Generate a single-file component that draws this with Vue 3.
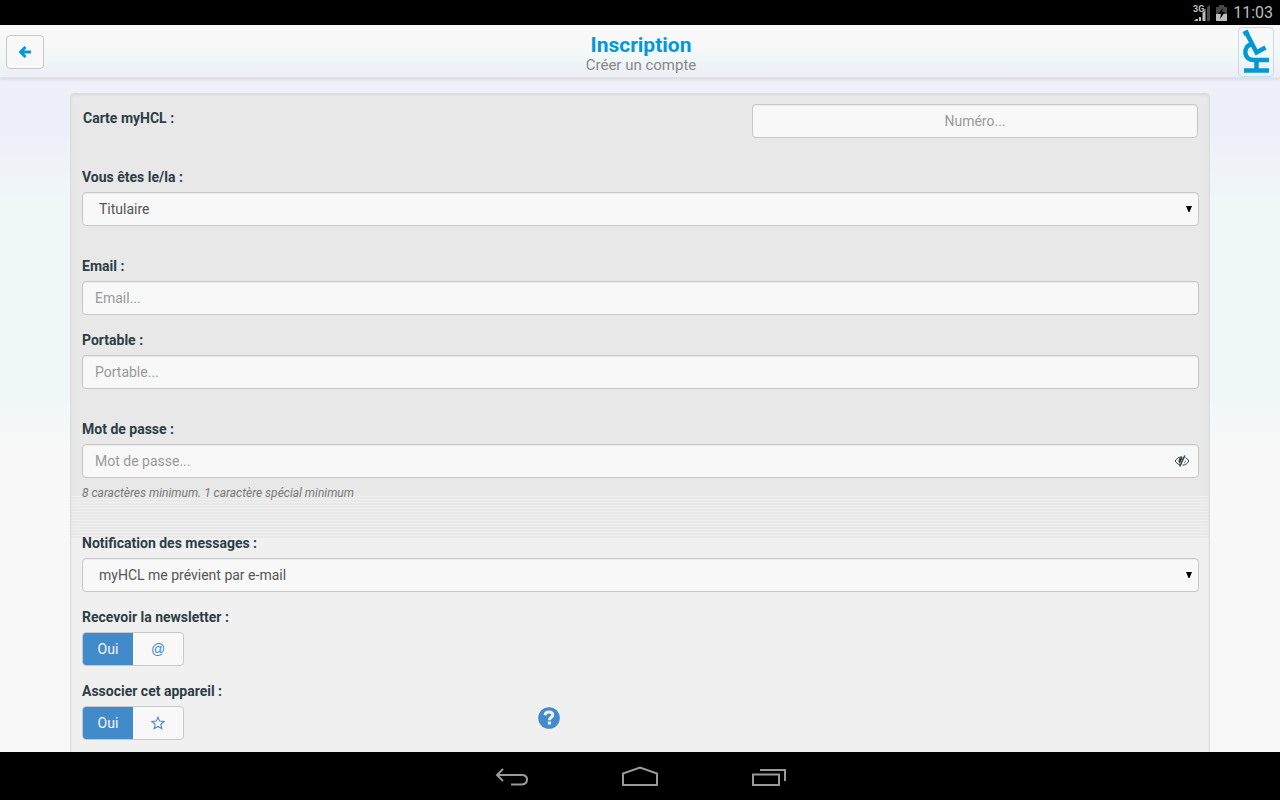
<template>
  <div class="screen">
    <!-- Device status bar -->
    <div class="status-bar">
      <svg width="17" height="17" viewBox="0 0 17 17" aria-label="3G">
        <path d="M1 17l2-2h2v2zM6 13h2v4h-2zM9.500 9h3v8h-3zM9.500 5h3v5h-3z" fill="#bdbdbd" />
        <path d="M14 3l3-2v16h-3z" fill="#4a4a4a" />
        <text x="0" y="8" class="signal-text">3G</text>
      </svg>
      <svg width="11" height="16" viewBox="0 0 11 16" aria-hidden="true">
        <path d="M3 0h5v2h3v14h-11v-14h3z" fill="#484848" />
        <path d="M0 9h11v7h-11z" fill="#bdbdbd" />
        <path d="M7 3l-5 6h3l-1 5 5-7h-3z" fill="#000" />
      </svg>
      <span class="status-time">11:03</span>
    </div>

    <header class="header">
      <button type="button" class="back-btn" aria-label="Retour">
        <svg width="12" height="12" viewBox="0 0 12 12" aria-hidden="true">
          <path d="M6.500 1L1.500 6l5 5M2 6h10" fill="none" stroke="#0099da" stroke-width="3" />
        </svg>
      </button>
      <div class="header-titles">
        <h1>Inscription</h1>
        <p>Créer un compte</p>
      </div>
      <a href="#" class="logo" aria-label="Laboratoire">
        <svg width="34" height="48" viewBox="0 0 34 48" aria-hidden="true">
          <g fill="none" stroke="#0099d4" stroke-width="4.500">
            <path d="M7.500 5L17.500 24.500l9-5" />
            <path d="M4.500 6l5-2.500" />
            <path d="M13.500 16C8 17 5.800 21 6.500 25.500C7.200 30 10.500 32 15 32H30" />
            <path d="M17.500 32v10M5 42.500h25" />
          </g>
        </svg>
      </a>
    </header>

    <main class="content">
      <form class="panel" @submit.prevent>
        <div class="card-row">
          <label for="card">Carte myHCL :</label>
          <input id="card" v-model="form.card" type="text" class="control card-input" placeholder="Numéro..." />
        </div>

        <div class="group spaced">
          <label for="role">Vous êtes le/la :</label>
          <div class="field">
            <select id="role" v-model="form.role" class="control">
              <option v-for="r in roles" :key="r">{{ r }}</option>
            </select>
            <svg class="caret" width="6" height="6" viewBox="0 0 6 6" aria-hidden="true">
              <path d="M0 0h6l-2.500 6h-1z" />
            </svg>
          </div>
        </div>

        <div class="group">
          <label for="email">Email :</label>
          <input id="email" v-model="form.email" type="email" class="control" placeholder="Email..." />
        </div>

        <div class="group spaced">
          <label for="mobile">Portable :</label>
          <input id="mobile" v-model="form.mobile" type="tel" class="control" placeholder="Portable..." />
        </div>

        <div class="group spaced">
          <label for="password">Mot de passe :</label>
          <div class="field">
            <input
              id="password"
              v-model="form.password"
              :type="showPassword ? 'text' : 'password'"
              class="control"
              placeholder="Mot de passe..."
            />
            <button
              type="button"
              class="eye-btn"
              aria-label="Afficher le mot de passe"
              @click="showPassword = !showPassword"
            >
              <svg width="16" height="12" viewBox="0 0 16 12" aria-hidden="true">
                <g fill="none" stroke="#2c3e46">
                  <path d="M6 9.800C4 9.200 2.200 8 1.200 6C2.700 3.500 5 1.800 8 1.800M11.500 2.600C13 3.400 14.100 4.600 14.800 6C13.600 8.400 11.500 10 8.500 10.200" />
                  <path d="M10.800 .500L5.800 11.500" stroke-width="1.400" />
                </g>
                <path d="M8.800 2.500L5.900 8.700C4.300 7.500 4.200 5 5.200 3.700C6 2.600 7.500 2.100 8.800 2.500z" fill="#2c3e46" />
                <path d="M11.600 5c.3 1.600-.4 2.900-1.700 3.500z" fill="#2c3e46" />
              </svg>
            </button>
          </div>
          <p class="hint">8 caractères minimum. 1 caractère spécial minimum</p>
        </div>

        <div class="group">
          <label for="notification">Notification des messages :</label>
          <div class="field">
            <select id="notification" v-model="form.notification" class="control">
              <option v-for="n in notifications" :key="n">{{ n }}</option>
            </select>
            <svg class="caret" width="6" height="6" viewBox="0 0 6 6" aria-hidden="true">
              <path d="M0 0h6l-2.500 6h-1z" />
            </svg>
          </div>
        </div>

        <div class="group">
          <label for="newsletter">Recevoir la newsletter :</label>
          <div class="switch">
            <input id="newsletter" v-model="form.newsletter" type="checkbox" />
            <span class="switch-on">{{ form.newsletter ? 'Oui' : 'Non' }}</span>
            <span class="switch-icon">@</span>
          </div>
        </div>

        <div class="group">
          <label for="device">Associer cet appareil :</label>
          <div class="device-row">
            <div class="switch">
              <input id="device" v-model="form.device" type="checkbox" />
              <span class="switch-on">{{ form.device ? 'Oui' : 'Non' }}</span>
              <span class="switch-icon">
                <svg width="14" height="14" viewBox="0 0 14 14" aria-hidden="true">
                  <path d="M7 1.200l1.700 3.900 4.500.4-3.400 2.800 1 4.300-3.800-2.200-3.800 2.200 1-4.300-3.400-2.800 4.500-.4z" fill="none" stroke="#428bca" stroke-width="1.100" />
                </svg>
              </span>
            </div>
            <button type="button" class="help-btn" aria-label="Aide">
              <svg width="22" height="22" viewBox="0 0 22 22" aria-hidden="true">
                <circle cx="11" cy="11" r="10.800" fill="#428bca" />
                <path d="M7 8.200C7.400 5.800 9 5 11 5C13.300 5 14.700 6.200 14.700 8C14.700 10.600 11.400 10.500 11.400 13.200" fill="none" stroke="#f0f0f0" stroke-width="3" />
                <path d="M9.800 14.500h3.200v3h-3.200z" fill="#f0f0f0" />
              </svg>
            </button>
          </div>
        </div>
      </form>
    </main>

    <!-- Device navigation bar -->
    <nav class="nav-bar">
      <button type="button" aria-label="Précédent">
        <svg width="36" height="24" viewBox="0 0 36 24" aria-hidden="true">
          <path d="M9 5L3 11l6 6M3 11h25q5 0 5 4.500t-5 5h-11" />
        </svg>
      </button>
      <button type="button" aria-label="Accueil">
        <svg width="36" height="24" viewBox="0 0 36 24" aria-hidden="true">
          <path d="M1 21V9.500L18 3.500l17 6V21z" />
        </svg>
      </button>
      <button type="button" aria-label="Applications récentes">
        <svg width="36" height="24" viewBox="0 0 36 24" aria-hidden="true">
          <path d="M3 10.500h26v10.500h-26zM10 6h25v11" />
        </svg>
      </button>
    </nav>
  </div>
</template>

<script setup>
import { reactive, ref } from 'vue'

const roles = ['Titulaire']
const notifications = ['myHCL me prévient par e-mail']

const showPassword = ref(false)

const form = reactive({
  card: '',
  role: roles[0],
  email: '',
  mobile: '',
  password: '',
  notification: notifications[0],
  newsletter: true,
  device: true,
})
</script>

<style>
body {
  margin: 0;
}
</style>

<style scoped>
* {
  box-sizing: border-box;
}

.screen {
  display: flex;
  flex-direction: column;
  height: 100vh;
  font-family: Roboto, 'Liberation Sans', sans-serif;
  font-size: 14px;
  line-height: 20px;
  color: #2c3e46;
  background: #f8f8f8;
}

button {
  padding: 0;
  border: 0;
  background: none;
  font: inherit;
  cursor: pointer;
}

.status-bar {
  display: flex;
  align-items: center;
  justify-content: flex-end;
  gap: 6px;
  height: 25px;
  padding-right: 7px;
  background: #000;
  color: #bdbdbd;
  flex: none;
}

.status-time {
  font-size: 16px;
}

.signal-text {
  font-size: 9px;
  font-weight: 700;
  fill: #bdbdbd;
  stroke: #000;
  stroke-width: 1px;
  paint-order: stroke;
}

.header {
  display: flex;
  align-items: center;
  justify-content: space-between;
  flex: none;
  height: 53px;
  padding: 2px 6px 0;
  border-bottom: 1px solid #dfe3e6;
  background: linear-gradient(#f8f8f8 0, #f8f8f8 20px, #eff8f7 34px, #efeff8 46px);
  box-shadow: 0 1px 4px rgba(0, 0, 0, 0.12);
  position: relative;
}

.back-btn {
  display: flex;
  align-items: center;
  justify-content: center;
  width: 38px;
  height: 34px;
  border: 1px solid #c8c8c8;
  border-radius: 4px;
  background: #f8f8f8;
}

.header-titles {
  padding-top: 4px;
  text-align: center;

  h1 {
    margin: 0;
    font-size: 21px;
    line-height: 22px;
    font-weight: 700;
    color: #0099da;
  }

  p {
    margin: 0;
    font-size: 15px;
    line-height: 18px;
    color: #888;
  }
}

.logo {
  display: flex;
  width: 36px;
  height: 50px;
  border: 1px solid #b9e3ee;
  border-radius: 4px;
}

.content {
  flex: 1;
  min-height: 0;
  overflow-y: auto;
  scrollbar-width: none;
  padding: 15px 70px;
  background: linear-gradient(#efeff9 0, #efeff9 55px, #eff8f7 130px, #eff8f7 315px, #f8f8f8 370px);
}

.panel {
  max-width: 1140px;
  margin: 0 auto;
  padding: 10px 10px 10px 11px;
  border: 1px solid #dcdcdc;
  border-radius: 4px;
  background:
    linear-gradient(#e8e8e8 402px, transparent 402px, transparent 444px, #f0f0f0 444px),
    repeating-linear-gradient(#f0f0f0 0, #f0f0f0 1px, #e8e8e8 1px, #e8e8e8 3px);
  box-shadow: inset 0 1px 2px rgba(0, 0, 0, 0.08);
}

label {
  display: block;
  margin-bottom: 5px;
  font-weight: 700;
}

.card-row {
  display: flex;
  justify-content: space-between;
  align-items: flex-start;
  margin-bottom: 29px;
  padding: 0 1px;

  label {
    margin-top: 4px;
  }
}

.card-row .card-input {
  width: 40%;
  text-align: center;
}

.group {
  margin-bottom: 15px;

  &.spaced {
    margin-bottom: 30px;
  }
}

.field {
  position: relative;
}

.control {
  display: block;
  width: 100%;
  height: 34px;
  padding: 6px 12px;
  border: 1px solid #c8c8c8;
  border-radius: 4px;
  background: #f8f8f8;
  box-shadow: inset 0 1px 1px rgba(0, 0, 0, 0.06);
  color: #555;
  font: inherit;
  appearance: none;

  &::placeholder {
    color: #999;
    opacity: 1;
  }
}

select.control {
  padding: 6px 16px;
}

.caret {
  position: absolute;
  top: 14px;
  right: 7px;
  pointer-events: none;
}

.eye-btn {
  position: absolute;
  top: 11px;
  right: 9px;
  display: flex;
}

.hint {
  margin: 5px 0 0;
  font-size: 12px;
  font-style: italic;
  color: #777;
}

.switch {
  position: relative;
  display: flex;
  width: 102px;
  height: 34px;
  border: 1px solid #c8c8c8;
  border-radius: 4px;
  background: #f8f8f8;
  overflow: hidden;

  input {
    position: absolute;
    inset: 0;
    width: 100%;
    height: 100%;
    margin: 0;
    opacity: 0;
    cursor: pointer;
  }
}

.switch-on,
.switch-icon {
  display: flex;
  flex: 1;
  align-items: center;
  justify-content: center;
}

.switch-on {
  background: #428bca;
  color: #f8f8f8;
}

.switch-icon {
  font-family: 'Liberation Sans', sans-serif;
  color: #428bca;
}

.device-row {
  display: grid;
  grid-template-columns: 2fr 3fr;
  column-gap: 16px;
  align-items: center;
}

.help-btn {
  display: flex;
  align-self: start;
  justify-self: start;
  margin-top: 1px;
}

.nav-bar {
  display: flex;
  align-items: center;
  justify-content: center;
  flex: none;
  height: 48px;
  background: #000;

  button {
    display: flex;
    align-items: center;
    justify-content: center;
    width: 128px;
    height: 48px;
  }

  path {
    fill: none;
    stroke: #999;
    stroke-width: 2;
  }
}
</style>
